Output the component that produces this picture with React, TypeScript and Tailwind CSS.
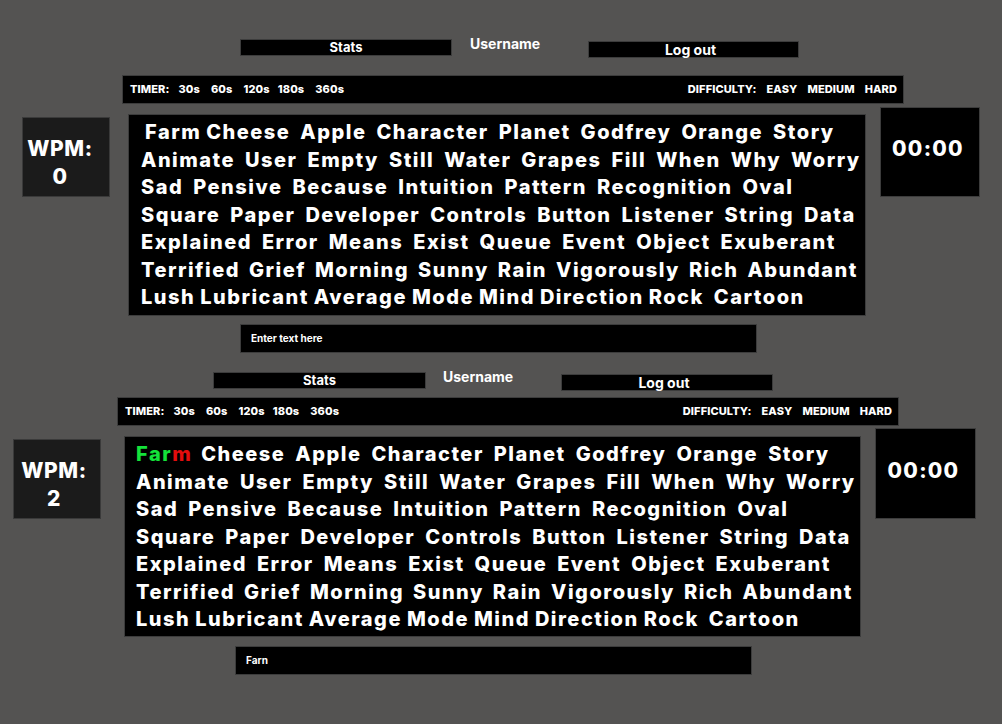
import React from "react";

const FONT = { fontFamily: "Inter, 'Noto Sans', sans-serif" };

type W = { t: string; gap?: "tight" | "normal" };

const LINES: W[][] = [
  [
    { t: "Farm", gap: "tight" },
    { t: "Cheese" },
    { t: "Apple" },
    { t: "Character" },
    { t: "Planet" },
    { t: "Godfrey" },
    { t: "Orange" },
    { t: "Story" },
  ],
  [
    { t: "Animate" },
    { t: "User" },
    { t: "Empty" },
    { t: "Still" },
    { t: "Water" },
    { t: "Grapes" },
    { t: "Fill" },
    { t: "When" },
    { t: "Why" },
    { t: "Worry" },
  ],
  [
    { t: "Sad" },
    { t: "Pensive" },
    { t: "Because" },
    { t: "Intuition" },
    { t: "Pattern" },
    { t: "Recognition" },
    { t: "Oval" },
  ],
  [
    { t: "Square" },
    { t: "Paper" },
    { t: "Developer" },
    { t: "Controls" },
    { t: "Button" },
    { t: "Listener" },
    { t: "String" },
    { t: "Data" },
  ],
  [
    { t: "Explained" },
    { t: "Error" },
    { t: "Means" },
    { t: "Exist" },
    { t: "Queue" },
    { t: "Event" },
    { t: "Object" },
    { t: "Exuberant" },
  ],
  [
    { t: "Terrified" },
    { t: "Grief" },
    { t: "Morning" },
    { t: "Sunny" },
    { t: "Rain" },
    { t: "Vigorously" },
    { t: "Rich" },
    { t: "Abundant" },
  ],
  [
    { t: "Lush", gap: "tight" },
    { t: "Lubricant", gap: "tight" },
    { t: "Average", gap: "tight" },
    { t: "Mode", gap: "tight" },
    { t: "Mind", gap: "tight" },
    { t: "Direction", gap: "tight" },
    { t: "Rock" },
    { t: "Cartoon" },
  ],
];

function Words({ typed }: { typed: boolean }) {
  return (
    <div className="flex flex-col text-[20px] font-extrabold leading-[27.5px] tracking-[0.075em] text-white whitespace-nowrap">
      {LINES.map((line, li) => (
        <div key={li} className="flex">
          {line.map((w, wi) => {
            const last = wi === line.length - 1;
            let gap = w.gap === "tight" ? "mr-[5px]" : li === 5 ? "mr-[9px]" : "mr-[10px]";
            if (typed && li === 0 && wi === 0) gap = "mr-[9px]";
            if (last) gap = "";
            if (typed && li === 0 && wi === 0) {
              return (
                <span key={wi} className={gap}>
                  <span className="text-[#14e33a]">Far</span>
                  <span className="text-[#e30d0d]">m</span>
                </span>
              );
            }
            return (
              <span key={wi} className={(li === 0 && wi === 0 ? "ml-[4px] " : "") + gap}>
                {w.t}
              </span>
            );
          })}
        </div>
      ))}
    </div>
  );
}

function TimerBar() {
  return (
    <div className="flex h-[29px] w-[782px] items-center justify-between border border-[#3c3c3c] bg-black pl-[7px] pr-[6px] text-[11px] font-extrabold tracking-[0.01em] text-white">
      <div className="flex items-center">
        <span>TIMER:</span>
        <span className="ml-[9px]">30s</span>
        <span className="ml-[11px]">60s</span>
        <span className="ml-[11px]">120s</span>
        <span className="ml-[8px]">180s</span>
        <span className="ml-[11px]">360s</span>
      </div>
      <div className="flex items-center">
        <span>DIFFICULTY:</span>
        <span className="ml-[10px]">EASY</span>
        <span className="ml-[10px]">MEDIUM</span>
        <span className="ml-[10px]">HARD</span>
      </div>
    </div>
  );
}

export default function App() {
  return (
    <div className="h-[724px] w-[1002px] overflow-hidden bg-[#545352]" style={FONT}>
      {/* ===== Top screen ===== */}
      <div className="flex flex-col">
        <div className="flex h-[19px] items-start pl-[240px] mt-[39px] text-[13px] font-bold text-white">
          <div className="flex h-[17px] w-[212px] items-center justify-center border border-[#3c3c3c] bg-black">
            Stats
          </div>
          <div className="w-[136px] pl-[18px] mt-[-5px] text-[14px] leading-[20px]">Username</div>
          <div className="mt-[2px] flex h-[17px] w-[211px] items-center justify-center border border-[#3c3c3c] bg-black pr-[6px] text-[14px]">
            Log out
          </div>
        </div>
        <div className="ml-[122px] mt-[17px]">
          <TimerBar />
        </div>
        <div className="flex items-start">
          <div className="ml-[22px] mt-[13px] flex h-[80px] w-[88px] flex-col items-center border border-[#3a3a3a] bg-[#1b1b1b] pr-[12px] pt-[17px] text-[21px] font-extrabold leading-[28px] tracking-[0.03em] text-white">
            <span>WPM:</span>
            <span>0</span>
          </div>
          <div className="ml-[18px] mt-[10px] h-[202px] w-[738px] border border-[#3c3c3c] bg-black pl-[12px] pt-[4px]">
            <Words typed={false} />
          </div>
          <div className="ml-[14px] mt-[3px] h-[90px] w-[100px] border border-[#3c3c3c] bg-black pr-[4px] pt-[27px] text-center text-[21px] font-extrabold leading-[28px] tracking-[0.06em] text-white">
            00:00
          </div>
        </div>
        <div className="ml-[240px] mt-[8px] flex h-[29px] w-[517px] items-center border border-[#3c3c3c] bg-black pl-[10px] text-[10px] font-bold text-white">
          Enter text here
        </div>
      </div>

      {/* ===== Bottom screen ===== */}
      <div className="flex flex-col">
        <div className="flex h-[19px] items-start pl-[213px] mt-[19px] text-[13px] font-bold text-white">
          <div className="flex h-[17px] w-[213px] items-center justify-center border border-[#3c3c3c] bg-black">
            Stats
          </div>
          <div className="w-[135px] pl-[17px] mt-[-5px] text-[14px] leading-[20px]">Username</div>
          <div className="mt-[2px] flex h-[17px] w-[212px] items-center justify-center border border-[#3c3c3c] bg-black pr-[6px] text-[14px]">
            Log out
          </div>
        </div>
        <div className="ml-[117px] mt-[6px]">
          <TimerBar />
        </div>
        <div className="flex items-start">
          <div className="ml-[13px] mt-[13px] flex h-[80px] w-[88px] flex-col items-center border border-[#3a3a3a] bg-[#1b1b1b] pr-[6px] pt-[17px] text-[21px] font-extrabold leading-[28px] tracking-[0.03em] text-white">
            <span>WPM:</span>
            <span>2</span>
          </div>
          <div className="ml-[23px] mt-[10px] h-[201px] w-[737px] border border-[#3c3c3c] bg-black pl-[11px] pt-[4px]">
            <Words typed={true} />
          </div>
          <div className="ml-[14px] mt-[2px] h-[91px] w-[101px] border border-[#3c3c3c] bg-black pr-[4px] pt-[28px] text-center text-[21px] font-extrabold leading-[28px] tracking-[0.06em] text-white">
            00:00
          </div>
        </div>
        <div className="ml-[235px] mt-[9px] flex h-[29px] w-[517px] items-center border border-[#3c3c3c] bg-black pl-[10px] text-[10px] font-bold text-white">
          Farn
        </div>
      </div>
    </div>
  );
}
